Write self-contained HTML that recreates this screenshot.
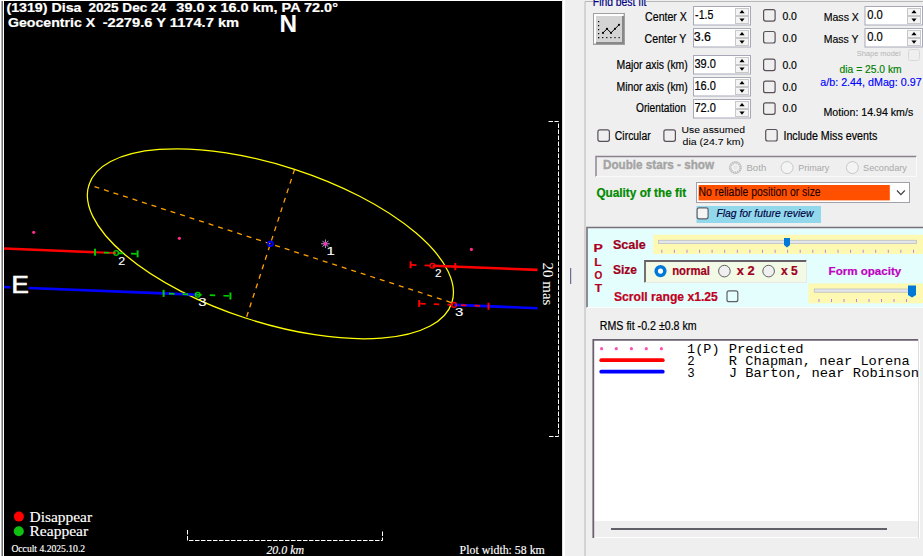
<!DOCTYPE html>
<html><head><meta charset="utf-8"><style>
html,body{margin:0;padding:0;width:923px;height:556px;overflow:hidden;background:#efefef;}
svg{display:block;font-family:"Liberation Sans",sans-serif;}
text{white-space:pre;}
</style></head><body>
<svg width="923" height="556" viewBox="0 0 923 556">
<rect x="0" y="0" width="923" height="556" fill="#efefef"/>
<rect x="0" y="0" width="565" height="1" fill="#fff"/>
<rect x="0" y="0" width="1" height="556" fill="#fff"/>
<rect x="1" y="1" width="1" height="555" fill="#b0b0b0"/>
<rect x="2" y="1" width="1" height="555" fill="#707070"/>
<rect x="3" y="1" width="1" height="555" fill="#fff"/>
<rect x="4" y="1" width="558" height="555" fill="#000"/>
<rect x="562" y="0" width="1" height="556" fill="#e0e0e0"/>
<rect x="563" y="0" width="2" height="556" fill="#fff"/>
<defs><clipPath id="pc"><rect x="4" y="1" width="558" height="555"/></clipPath></defs>
<g clip-path="url(#pc)">
<line x1="88.94" y1="184.84" x2="451.86" y2="302.76" stroke="#ffa000" stroke-width="1.3" stroke-dasharray="5 5" stroke-dashoffset="4.20"/>
<line x1="294.60" y1="169.33" x2="246.20" y2="318.27" stroke="#ffa000" stroke-width="1.3" stroke-dasharray="5 5"/>
<ellipse cx="270.4" cy="243.8" rx="190.8" ry="78.3" transform="rotate(18 270.4 243.8)" fill="none" stroke="#ffff00" stroke-width="1.25"/>
<circle cx="33.7" cy="232.3" r="1.6" fill="#ff2a8a"/>
<circle cx="179.4" cy="238.3" r="1.6" fill="#ff2a8a"/>
<circle cx="471.4" cy="249.4" r="1.6" fill="#ff2a8a"/>
<line x1="4" y1="248.54" x2="95" y2="252.18" stroke="#ff0000" stroke-width="2.6"/>
<line x1="95" y1="252.18" x2="116.2" y2="253.03" stroke="#ff0000" stroke-width="2"/>
<line x1="95.7" y1="252.21" x2="137" y2="253.86" stroke="#00cc00" stroke-width="1.7" stroke-dasharray="5.5 8.1" stroke-dashoffset="-8.2"/>
<rect x="94" y="248.68" width="2" height="7" fill="#00cc00"/>
<rect x="136.6" y="250.38" width="2" height="7" fill="#00cc00"/>
<circle cx="116.2" cy="253.03" r="2.4" fill="none" stroke="#00cc00" stroke-width="1.3"/>
<line x1="432.5" y1="265.68" x2="537.5" y2="269.88" stroke="#ff0000" stroke-width="2.6"/>
<line x1="411" y1="264.82" x2="455" y2="266.58" stroke="#ff0000" stroke-width="1.7" stroke-dasharray="5.5 8.1" stroke-dashoffset="0"/>
<rect x="409.6" y="261.30" width="2" height="7" fill="#ff0000"/>
<rect x="454.3" y="263.09" width="2" height="7" fill="#ff0000"/>
<circle cx="432.5" cy="265.68" r="2.4" fill="none" stroke="#ff0000" stroke-width="1.3"/>
<line x1="4" y1="287.04" x2="163.6" y2="293.38" stroke="#0000ff" stroke-width="2.6"/>
<line x1="163.6" y1="293.38" x2="197.7" y2="294.73" stroke="#0000ff" stroke-width="2.6"/>
<line x1="164.6" y1="293.42" x2="230" y2="296.01" stroke="#00cc00" stroke-width="1.7" stroke-dasharray="5.5 8.1" stroke-dashoffset="-4.4"/>
<rect x="162.6" y="289.88" width="2" height="7" fill="#00cc00"/>
<rect x="229.4" y="292.53" width="2" height="7" fill="#00cc00"/>
<circle cx="197.7" cy="294.73" r="2.4" fill="none" stroke="#00cc00" stroke-width="1.3"/>
<line x1="454" y1="304.90" x2="537.5" y2="308.22" stroke="#0000ff" stroke-width="2.6"/>
<line x1="420.2" y1="303.56" x2="488" y2="306.25" stroke="#ff0000" stroke-width="1.7" stroke-dasharray="5.5 8.1" stroke-dashoffset="0"/>
<rect x="418.2" y="300.02" width="2" height="7" fill="#ff0000"/>
<rect x="487.5" y="302.77" width="2" height="7" fill="#ff0000"/>
<circle cx="454" cy="304.90" r="2.4" fill="none" stroke="#ff0000" stroke-width="1.3"/>
<circle cx="270.4" cy="243.8" r="2.3" fill="none" stroke="#0000ff" stroke-width="2"/>
<line x1="325.4" y1="243.8" x2="329.70" y2="243.80" stroke="#b0a0c0" stroke-width="1"/>
<line x1="325.4" y1="243.8" x2="328.44" y2="246.84" stroke="#b0a0c0" stroke-width="1"/>
<line x1="325.4" y1="243.8" x2="325.40" y2="248.10" stroke="#b0a0c0" stroke-width="1"/>
<line x1="325.4" y1="243.8" x2="322.36" y2="246.84" stroke="#b0a0c0" stroke-width="1"/>
<line x1="325.4" y1="243.8" x2="321.10" y2="243.80" stroke="#b0a0c0" stroke-width="1"/>
<line x1="325.4" y1="243.8" x2="322.36" y2="240.76" stroke="#b0a0c0" stroke-width="1"/>
<line x1="325.4" y1="243.8" x2="325.40" y2="239.50" stroke="#b0a0c0" stroke-width="1"/>
<line x1="325.4" y1="243.8" x2="328.44" y2="240.76" stroke="#b0a0c0" stroke-width="1"/>
<circle cx="325.4" cy="243.8" r="1.9" fill="#ff30c0"/>
<path d="M548.5,121.5 H558.5 V436.5 H548.5" fill="none" stroke="#fff" stroke-width="1" stroke-dasharray="4.5 1.5"/>
<path d="M187.5,530 V540.5 H382.5 V530" fill="none" stroke="#fff" stroke-width="1" stroke-dasharray="4.5 1.5"/>
<rect x="10.5" y="274" width="18" height="20" fill="#000"/>
<text x="6.41" y="11.8" font-family="Liberation Sans" font-size="13" font-weight="bold" font-style="normal" fill="#fff" stroke="#fff" stroke-width="0.2" textLength="75.12" lengthAdjust="spacingAndGlyphs">(1319) Disa</text>
<text x="88.40" y="11.8" font-family="Liberation Sans" font-size="13" font-weight="bold" font-style="normal" fill="#fff" stroke="#fff" stroke-width="0.2" textLength="77.73" lengthAdjust="spacingAndGlyphs">2025 Dec 24</text>
<text x="176.39" y="11.8" font-family="Liberation Sans" font-size="13" font-weight="bold" font-style="normal" fill="#fff" stroke="#fff" stroke-width="0.2" textLength="161.56" lengthAdjust="spacingAndGlyphs">39.0 x 16.0 km, PA 72.0°</text>
<text x="8.00" y="26.5" font-family="Liberation Sans" font-size="13" font-weight="bold" font-style="normal" fill="#fff" stroke="#fff" stroke-width="0.2" textLength="87.12" lengthAdjust="spacingAndGlyphs">Geocentric X</text>
<text x="102.70" y="26.5" font-family="Liberation Sans" font-size="13" font-weight="bold" font-style="normal" fill="#fff" stroke="#fff" stroke-width="0.2" textLength="136.39" lengthAdjust="spacingAndGlyphs">-2279.6 Y 1174.7 km</text>
<text x="279.47" y="31.8" font-family="Liberation Sans" font-size="23.5" font-weight="bold" font-style="normal" fill="#fff" stroke="#fff" stroke-width="0.1" textLength="17.55" lengthAdjust="spacingAndGlyphs">N</text>
<text x="11.40" y="292.9" font-family="Liberation Sans" font-size="23.5" font-weight="normal" font-style="normal" fill="#fff" stroke="#fff" stroke-width="0.7" textLength="17.26" lengthAdjust="spacingAndGlyphs">E</text>
<text x="326.64" y="255.0" font-family="Liberation Sans" font-size="11" font-weight="normal" font-style="normal" fill="#fff" stroke="#fff" stroke-width="0.1" textLength="8.33" lengthAdjust="spacingAndGlyphs">1</text>
<text x="118.20" y="265.0" font-family="Liberation Sans" font-size="11" font-weight="normal" font-style="normal" fill="#fff" stroke="#fff" stroke-width="0.1" textLength="6.94" lengthAdjust="spacingAndGlyphs">2</text>
<text x="434.90" y="277.0" font-family="Liberation Sans" font-size="11" font-weight="normal" font-style="normal" fill="#fff" stroke="#fff" stroke-width="0.1" textLength="6.53" lengthAdjust="spacingAndGlyphs">2</text>
<text x="198.34" y="305.8" font-family="Liberation Sans" font-size="11" font-weight="normal" font-style="normal" fill="#fff" stroke="#fff" stroke-width="0.1" textLength="8.33" lengthAdjust="spacingAndGlyphs">3</text>
<text x="454.94" y="315.8" font-family="Liberation Sans" font-size="11" font-weight="normal" font-style="normal" fill="#fff" stroke="#fff" stroke-width="0.1" textLength="8.33" lengthAdjust="spacingAndGlyphs">3</text>
<text x="266.40" y="553.6" font-family="Liberation Serif" font-size="13" font-weight="normal" font-style="italic" fill="#fff" stroke="#fff" stroke-width="0.15" textLength="37.66" lengthAdjust="spacingAndGlyphs">20.0 km</text>
<text x="459.59" y="553.7" font-family="Liberation Serif" font-size="13" font-weight="normal" font-style="normal" fill="#fff" stroke="#fff" stroke-width="0.15" textLength="85.21" lengthAdjust="spacingAndGlyphs">Plot width: 58 km</text>
<text x="29.54" y="521.5" font-family="Liberation Serif" font-size="14.5" font-weight="normal" font-style="normal" fill="#fff" stroke="#fff" stroke-width="0.15" textLength="62.53" lengthAdjust="spacingAndGlyphs">Disappear</text>
<text x="29.53" y="535.9" font-family="Liberation Serif" font-size="14.5" font-weight="normal" font-style="normal" fill="#fff" stroke="#fff" stroke-width="0.15" textLength="58.60" lengthAdjust="spacingAndGlyphs">Reappear</text>
<text x="11.40" y="552.2" font-family="Liberation Serif" font-size="10" font-weight="normal" font-style="normal" fill="#fff" stroke="#fff" stroke-width="0.15" textLength="73.73" lengthAdjust="spacingAndGlyphs">Occult 4.2025.10.2</text>
<text transform="translate(542.8,262.6) rotate(90)" font-family="Liberation Serif" font-size="15" fill="#fff" textLength="42.8" lengthAdjust="spacingAndGlyphs">20 mas</text>
<circle cx="18.9" cy="516.6" r="5" fill="#ff0000"/>
<circle cx="18.8" cy="531.3" r="5" fill="#10c010"/>
</g>
<rect x="570" y="268" width="1.2" height="16" fill="#6a7090"/>
<rect x="584.5" y="1" width="1" height="0" fill="#b8b8b8"/>
<path d="M593,1.5 H585 V556" fill="none" stroke="#b8b8b8" stroke-width="1"/>
<path d="M646,1.5 H923" fill="none" stroke="#b8b8b8" stroke-width="1"/>
<text x="592.84" y="6.0" font-family="Liberation Sans" font-size="12" font-weight="normal" font-style="normal" fill="#000080" stroke="#000080" stroke-width="0.2" textLength="53.49" lengthAdjust="spacingAndGlyphs">Find best fit</text>
<rect x="593.5" y="13.5" width="31" height="31" fill="#d4d4d4" stroke="#a0a0a0" stroke-width="1"/>
<path d="M595,43 V15 H623" fill="none" stroke="#fff" stroke-width="2"/>
<path d="M596,43 H623 V16" fill="none" stroke="#888" stroke-width="2"/>
<rect x="598" y="21" width="1.2" height="1.2" fill="#000"/>
<rect x="598" y="25" width="1.2" height="1.2" fill="#000"/>
<rect x="598" y="29" width="1.2" height="1.2" fill="#000"/>
<rect x="598" y="33" width="1.2" height="1.2" fill="#000"/>
<rect x="598" y="37" width="1.2" height="1.2" fill="#000"/>
<rect x="598.0" y="37" width="1.2" height="1.2" fill="#000"/>
<rect x="602.1" y="37" width="1.2" height="1.2" fill="#000"/>
<rect x="606.2" y="37" width="1.2" height="1.2" fill="#000"/>
<rect x="610.3" y="37" width="1.2" height="1.2" fill="#000"/>
<rect x="614.4" y="37" width="1.2" height="1.2" fill="#000"/>
<rect x="618.5" y="37" width="1.2" height="1.2" fill="#000"/>
<polyline points="603,32.9 607,28.8 611,32.9 615,28.8 619,24.8" fill="none" stroke="#000" stroke-width="1"/>
<circle cx="603" cy="32.9" r="1.1" fill="#000"/>
<circle cx="607" cy="28.8" r="1.1" fill="#000"/>
<circle cx="611" cy="32.9" r="1.1" fill="#000"/>
<circle cx="615" cy="28.8" r="1.1" fill="#000"/>
<circle cx="619" cy="24.8" r="1.1" fill="#000"/>
<rect x="693.5" y="6.5" width="57" height="18.5" fill="#fff" stroke="#a8a8b8" stroke-width="1"/>
<rect x="735.5" y="8.5" width="13" height="7" fill="#f4f4f4" stroke="#c8c8c8" stroke-width="1"/>
<rect x="735.5" y="16.5" width="13" height="7" fill="#f4f4f4" stroke="#c8c8c8" stroke-width="1"/>
<path d="M739.4,13.3 L742,10 L744.6,13.3 Z" fill="#000"/>
<path d="M739.4,18.5 L742,21.8 L744.6,18.5 Z" fill="#000"/>
<rect x="693.5" y="28.5" width="57" height="18.5" fill="#fff" stroke="#a8a8b8" stroke-width="1"/>
<rect x="735.5" y="30.5" width="13" height="7" fill="#f4f4f4" stroke="#c8c8c8" stroke-width="1"/>
<rect x="735.5" y="38.5" width="13" height="7" fill="#f4f4f4" stroke="#c8c8c8" stroke-width="1"/>
<path d="M739.4,35.3 L742,32 L744.6,35.3 Z" fill="#000"/>
<path d="M739.4,40.5 L742,43.8 L744.6,40.5 Z" fill="#000"/>
<rect x="693.5" y="55.5" width="57" height="18.5" fill="#fff" stroke="#a8a8b8" stroke-width="1"/>
<rect x="735.5" y="57.5" width="13" height="7" fill="#f4f4f4" stroke="#c8c8c8" stroke-width="1"/>
<rect x="735.5" y="65.5" width="13" height="7" fill="#f4f4f4" stroke="#c8c8c8" stroke-width="1"/>
<path d="M739.4,62.3 L742,59 L744.6,62.3 Z" fill="#000"/>
<path d="M739.4,67.5 L742,70.8 L744.6,67.5 Z" fill="#000"/>
<rect x="693.5" y="77.5" width="57" height="18.5" fill="#fff" stroke="#a8a8b8" stroke-width="1"/>
<rect x="735.5" y="79.5" width="13" height="7" fill="#f4f4f4" stroke="#c8c8c8" stroke-width="1"/>
<rect x="735.5" y="87.5" width="13" height="7" fill="#f4f4f4" stroke="#c8c8c8" stroke-width="1"/>
<path d="M739.4,84.3 L742,81 L744.6,84.3 Z" fill="#000"/>
<path d="M739.4,89.5 L742,92.8 L744.6,89.5 Z" fill="#000"/>
<rect x="693.5" y="99.5" width="57" height="18.5" fill="#fff" stroke="#a8a8b8" stroke-width="1"/>
<rect x="735.5" y="101.5" width="13" height="7" fill="#f4f4f4" stroke="#c8c8c8" stroke-width="1"/>
<rect x="735.5" y="109.5" width="13" height="7" fill="#f4f4f4" stroke="#c8c8c8" stroke-width="1"/>
<path d="M739.4,106.3 L742,103 L744.6,106.3 Z" fill="#000"/>
<path d="M739.4,111.5 L742,114.8 L744.6,111.5 Z" fill="#000"/>
<rect x="865.0" y="6.5" width="57.5" height="18.5" fill="#fff" stroke="#a8a8b8" stroke-width="1"/>
<rect x="907.5" y="8.5" width="13" height="7" fill="#f4f4f4" stroke="#c8c8c8" stroke-width="1"/>
<rect x="907.5" y="16.5" width="13" height="7" fill="#f4f4f4" stroke="#c8c8c8" stroke-width="1"/>
<path d="M911.4,13.3 L914,10 L916.6,13.3 Z" fill="#000"/>
<path d="M911.4,18.5 L914,21.8 L916.6,18.5 Z" fill="#000"/>
<rect x="865.0" y="28.5" width="57.5" height="18.5" fill="#fff" stroke="#a8a8b8" stroke-width="1"/>
<rect x="907.5" y="30.5" width="13" height="7" fill="#f4f4f4" stroke="#c8c8c8" stroke-width="1"/>
<rect x="907.5" y="38.5" width="13" height="7" fill="#f4f4f4" stroke="#c8c8c8" stroke-width="1"/>
<path d="M911.4,35.3 L914,32 L916.6,35.3 Z" fill="#000"/>
<path d="M911.4,40.5 L914,43.8 L916.6,40.5 Z" fill="#000"/>
<rect x="763.6" y="9.6" width="11.5" height="11.5" rx="2" ry="2" fill="none" stroke="#5a505a" stroke-width="1.2"/>
<rect x="763.6" y="31.5" width="11.5" height="11.5" rx="2" ry="2" fill="none" stroke="#5a505a" stroke-width="1.2"/>
<rect x="763.6" y="59.1" width="11.5" height="11.5" rx="2" ry="2" fill="none" stroke="#5a505a" stroke-width="1.2"/>
<rect x="763.6" y="81.19999999999999" width="11.5" height="11.5" rx="2" ry="2" fill="none" stroke="#5a505a" stroke-width="1.2"/>
<rect x="763.6" y="102.8" width="11.5" height="11.5" rx="2" ry="2" fill="none" stroke="#5a505a" stroke-width="1.2"/>
<text x="645.12" y="20.7" font-family="Liberation Sans" font-size="12" font-weight="normal" font-style="normal" fill="#000" stroke="#000" stroke-width="0.2" textLength="41.80" lengthAdjust="spacingAndGlyphs">Center X</text>
<text x="644.62" y="42.7" font-family="Liberation Sans" font-size="12" font-weight="normal" font-style="normal" fill="#000" stroke="#000" stroke-width="0.2" textLength="41.61" lengthAdjust="spacingAndGlyphs">Center Y</text>
<text x="616.53" y="69.4" font-family="Liberation Sans" font-size="12" font-weight="normal" font-style="normal" fill="#000" stroke="#000" stroke-width="0.2" textLength="71.25" lengthAdjust="spacingAndGlyphs">Major axis (km)</text>
<text x="616.53" y="91.2" font-family="Liberation Sans" font-size="12" font-weight="normal" font-style="normal" fill="#000" stroke="#000" stroke-width="0.2" textLength="71.25" lengthAdjust="spacingAndGlyphs">Minor axis (km)</text>
<text x="636.00" y="112.3" font-family="Liberation Sans" font-size="12" font-weight="normal" font-style="normal" fill="#000" stroke="#000" stroke-width="0.2" textLength="49.90" lengthAdjust="spacingAndGlyphs">Orientation</text>
<text x="695.10" y="18.9" font-family="Liberation Sans" font-size="12" font-weight="normal" font-style="normal" fill="#000" stroke="#000" stroke-width="0.2" textLength="18.31" lengthAdjust="spacingAndGlyphs">-1.5</text>
<text x="693.77" y="40.9" font-family="Liberation Sans" font-size="12" font-weight="normal" font-style="normal" fill="#000" stroke="#000" stroke-width="0.2" textLength="17.24" lengthAdjust="spacingAndGlyphs">3.6</text>
<text x="694.38" y="67.6" font-family="Liberation Sans" font-size="12" font-weight="normal" font-style="normal" fill="#000" stroke="#000" stroke-width="0.2" textLength="21.45" lengthAdjust="spacingAndGlyphs">39.0</text>
<text x="694.38" y="89.6" font-family="Liberation Sans" font-size="12" font-weight="normal" font-style="normal" fill="#000" stroke="#000" stroke-width="0.2" textLength="21.45" lengthAdjust="spacingAndGlyphs">16.0</text>
<text x="694.38" y="111.6" font-family="Liberation Sans" font-size="12" font-weight="normal" font-style="normal" fill="#000" stroke="#000" stroke-width="0.2" textLength="21.45" lengthAdjust="spacingAndGlyphs">72.0</text>
<text x="782.40" y="20.2" font-family="Liberation Sans" font-size="11.6" font-weight="normal" font-style="normal" fill="#000" stroke="#000" stroke-width="0.2" textLength="14.51" lengthAdjust="spacingAndGlyphs">0.0</text>
<text x="782.40" y="41.9" font-family="Liberation Sans" font-size="11.6" font-weight="normal" font-style="normal" fill="#000" stroke="#000" stroke-width="0.2" textLength="14.51" lengthAdjust="spacingAndGlyphs">0.0</text>
<text x="782.40" y="68.9" font-family="Liberation Sans" font-size="11.6" font-weight="normal" font-style="normal" fill="#000" stroke="#000" stroke-width="0.2" textLength="14.51" lengthAdjust="spacingAndGlyphs">0.0</text>
<text x="782.40" y="90.5" font-family="Liberation Sans" font-size="11.6" font-weight="normal" font-style="normal" fill="#000" stroke="#000" stroke-width="0.2" textLength="14.51" lengthAdjust="spacingAndGlyphs">0.0</text>
<text x="782.40" y="112.0" font-family="Liberation Sans" font-size="11.6" font-weight="normal" font-style="normal" fill="#000" stroke="#000" stroke-width="0.2" textLength="14.51" lengthAdjust="spacingAndGlyphs">0.0</text>
<text x="823.70" y="20.8" font-family="Liberation Sans" font-size="10.6" font-weight="normal" font-style="normal" fill="#000" stroke="#000" stroke-width="0.15" textLength="35.22" lengthAdjust="spacingAndGlyphs">Mass X</text>
<text x="823.71" y="43.0" font-family="Liberation Sans" font-size="10.6" font-weight="normal" font-style="normal" fill="#000" stroke="#000" stroke-width="0.15" textLength="34.73" lengthAdjust="spacingAndGlyphs">Mass Y</text>
<text x="867.20" y="18.9" font-family="Liberation Sans" font-size="12" font-weight="normal" font-style="normal" fill="#000" stroke="#000" stroke-width="0.2" textLength="15.54" lengthAdjust="spacingAndGlyphs">0.0</text>
<text x="867.20" y="40.6" font-family="Liberation Sans" font-size="12" font-weight="normal" font-style="normal" fill="#000" stroke="#000" stroke-width="0.2" textLength="15.54" lengthAdjust="spacingAndGlyphs">0.0</text>
<text x="856.73" y="55.6" font-family="Liberation Sans" font-size="7.7" font-weight="normal" font-style="normal" fill="#b4b4b4" textLength="43.97" lengthAdjust="spacingAndGlyphs">Shape model</text>
<text x="839.60" y="72.6" font-family="Liberation Sans" font-size="10.3" font-weight="normal" font-style="normal" fill="#008000" stroke="#008000" stroke-width="0.15" textLength="62.01" lengthAdjust="spacingAndGlyphs">dia = 25.0 km</text>
<text x="820.30" y="86.4" font-family="Liberation Sans" font-size="10.6" font-weight="normal" font-style="normal" fill="#0000ff" stroke="#0000ff" stroke-width="0.15" textLength="101.33" lengthAdjust="spacingAndGlyphs">a/b: 2.44, dMag: 0.97</text>
<text x="823.54" y="116.4" font-family="Liberation Sans" font-size="10" font-weight="normal" font-style="normal" fill="#000" stroke="#000" stroke-width="0.15" textLength="89.68" lengthAdjust="spacingAndGlyphs">Motion: 14.94 km/s</text>
<text x="614.83" y="139.8" font-family="Liberation Sans" font-size="12" font-weight="normal" font-style="normal" fill="#000" stroke="#000" stroke-width="0.2" textLength="35.87" lengthAdjust="spacingAndGlyphs">Circular</text>
<text x="681.52" y="133.3" font-family="Liberation Sans" font-size="9.6" font-weight="normal" font-style="normal" fill="#000" stroke="#000" stroke-width="0.05" textLength="63.49" lengthAdjust="spacingAndGlyphs">Use assumed</text>
<text x="682.60" y="145.2" font-family="Liberation Sans" font-size="9.6" font-weight="normal" font-style="normal" fill="#000" stroke="#000" stroke-width="0.05" textLength="61.38" lengthAdjust="spacingAndGlyphs">dia (24.7 km)</text>
<text x="783.41" y="139.5" font-family="Liberation Sans" font-size="12" font-weight="normal" font-style="normal" fill="#000" stroke="#000" stroke-width="0.2" textLength="93.84" lengthAdjust="spacingAndGlyphs">Include Miss events</text>
<rect x="908.5" y="49.5" width="11" height="11" rx="2" fill="none" stroke="#d8d8d8" stroke-width="1"/>
<rect x="597.9" y="129.79999999999998" width="11.5" height="11.5" rx="2" ry="2" fill="none" stroke="#5a505a" stroke-width="1.2"/>
<rect x="663.9" y="129.79999999999998" width="11.5" height="11.5" rx="2" ry="2" fill="none" stroke="#5a505a" stroke-width="1.2"/>
<rect x="765.7" y="129.5" width="11.5" height="11.5" rx="2" ry="2" fill="none" stroke="#5a505a" stroke-width="1.2"/>
<path d="M596,176.5 V156.5 H916.5" fill="none" stroke="#8a8090" stroke-width="1.4"/>
<path d="M916.5,156.5 V176.5 H596" fill="none" stroke="#fafafa" stroke-width="1"/>
<text x="603.03" y="169.2" font-family="Liberation Sans" font-size="12" font-weight="bold" font-style="normal" fill="#a4a4a4" stroke="#a4a4a4" stroke-width="0.35" textLength="111.00" lengthAdjust="spacingAndGlyphs">Double stars - show</text>
<text x="746.45" y="170.5" font-family="Liberation Sans" font-size="9.2" font-weight="normal" font-style="normal" fill="#a8a8a8" textLength="19.80" lengthAdjust="spacingAndGlyphs">Both</text>
<text x="798.32" y="170.5" font-family="Liberation Sans" font-size="9.2" font-weight="normal" font-style="normal" fill="#a8a8a8" textLength="31.04" lengthAdjust="spacingAndGlyphs">Primary</text>
<text x="863.00" y="170.5" font-family="Liberation Sans" font-size="9.2" font-weight="normal" font-style="normal" fill="#a8a8a8" textLength="43.94" lengthAdjust="spacingAndGlyphs">Secondary</text>
<circle cx="735.4" cy="167.6" r="6" fill="#f4f4f4" stroke="#c8c8c8" stroke-width="1"/>
<circle cx="787.1" cy="167.6" r="6" fill="#f4f4f4" stroke="#c8c8c8" stroke-width="1"/>
<circle cx="852.4" cy="167.6" r="6" fill="#f4f4f4" stroke="#c8c8c8" stroke-width="1"/>
<circle cx="735.4" cy="167.6" r="4.8" fill="none" stroke="#b8b8b8" stroke-width="2.2" stroke-dasharray="1.2 0.9"/>
<circle cx="735.4" cy="167.6" r="2.4" fill="#e8e8e8"/>
<text x="596.40" y="196.7" font-family="Liberation Sans" font-size="12" font-weight="bold" font-style="normal" fill="#008a00" stroke="#008a00" stroke-width="0.2" textLength="89.74" lengthAdjust="spacingAndGlyphs">Quality of the fit</text>
<rect x="696.5" y="182.5" width="213" height="20" fill="#fff" stroke="#a0a0a8" stroke-width="1"/>
<rect x="698.6" y="185" width="191.2" height="15.4" fill="#ff5000"/>
<path d="M897,190.5 L900.9,194.6 L904.8,190.5" fill="none" stroke="#404040" stroke-width="1.2"/>
<text x="698.53" y="196.1" font-family="Liberation Sans" font-size="12" font-weight="normal" font-style="normal" fill="#200000" stroke="#200000" stroke-width="0.1" textLength="122.12" lengthAdjust="spacingAndGlyphs">No reliable position or size</text>
<rect x="696.5" y="206" width="124.5" height="17" fill="#92d8ec"/>
<rect x="697.1" y="207.79999999999998" width="11.0" height="11.0" rx="2" ry="2" fill="#f4f4f4" stroke="#606068" stroke-width="1.2"/>
<text x="716.40" y="217.1" font-family="Liberation Sans" font-size="10.8" font-weight="normal" font-style="italic" fill="#000040" stroke="#000040" stroke-width="0.15" textLength="97.15" lengthAdjust="spacingAndGlyphs">Flag for future review</text>
<rect x="586.5" y="227.5" width="340" height="80" fill="#e4fdfd"/>
<path d="M587,307.5 V227.5 H923" fill="none" stroke="#787078" stroke-width="1.6"/>
<path d="M587,307.5 H923" fill="none" stroke="#fafafa" stroke-width="1"/>
<text x="593.48" y="252.2" font-family="Liberation Sans" font-size="11.5" font-weight="bold" font-style="normal" fill="#b00020" stroke="#b00020" stroke-width="0.2" textLength="9.33" lengthAdjust="spacingAndGlyphs">P</text>
<text x="594.15" y="266.0" font-family="Liberation Sans" font-size="11.5" font-weight="bold" font-style="normal" fill="#b00020" stroke="#b00020" stroke-width="0.2" textLength="7.38" lengthAdjust="spacingAndGlyphs">L</text>
<text x="594.50" y="279.0" font-family="Liberation Sans" font-size="11.5" font-weight="bold" font-style="normal" fill="#b00020" stroke="#b00020" stroke-width="0.2" textLength="7.76" lengthAdjust="spacingAndGlyphs">O</text>
<text x="594.70" y="291.8" font-family="Liberation Sans" font-size="11.5" font-weight="bold" font-style="normal" fill="#b00020" stroke="#b00020" stroke-width="0.2" textLength="7.33" lengthAdjust="spacingAndGlyphs">T</text>
<text x="612.95" y="248.5" font-family="Liberation Sans" font-size="12" font-weight="bold" font-style="normal" fill="#a00020" stroke="#a00020" stroke-width="0.2" textLength="32.82" lengthAdjust="spacingAndGlyphs">Scale</text>
<text x="613.00" y="274.3" font-family="Liberation Sans" font-size="12" font-weight="bold" font-style="normal" fill="#a00020" stroke="#a00020" stroke-width="0.2" textLength="24.02" lengthAdjust="spacingAndGlyphs">Size</text>
<text x="613.99" y="300.5" font-family="Liberation Sans" font-size="12" font-weight="bold" font-style="normal" fill="#c00020" stroke="#c00020" stroke-width="0.2" textLength="103.84" lengthAdjust="spacingAndGlyphs">Scroll range x1.25</text>
<text x="828.57" y="275.4" font-family="Liberation Sans" font-size="11.2" font-weight="bold" font-style="normal" fill="#c000c0" stroke="#c000c0" stroke-width="0.2" textLength="72.69" lengthAdjust="spacingAndGlyphs">Form opacity</text>
<rect x="653.3" y="234.8" width="270" height="19.2" fill="#fdf8b2"/>
<rect x="658.5" y="240.3" width="258" height="3.2" fill="#e4e4ec" stroke="#b8c0c0" stroke-width="0.8"/>
<rect x="661.3" y="249.8" width="1" height="3" fill="#c080e0"/>
<rect x="673.9" y="249.8" width="1" height="3" fill="#c080e0"/>
<rect x="686.5" y="249.8" width="1" height="3" fill="#c080e0"/>
<rect x="699.1" y="249.8" width="1" height="3" fill="#c080e0"/>
<rect x="711.6" y="249.8" width="1" height="3" fill="#c080e0"/>
<rect x="724.2" y="249.8" width="1" height="3" fill="#c080e0"/>
<rect x="736.8" y="249.8" width="1" height="3" fill="#c080e0"/>
<rect x="749.4" y="249.8" width="1" height="3" fill="#c080e0"/>
<rect x="762.0" y="249.8" width="1" height="3" fill="#c080e0"/>
<rect x="774.6" y="249.8" width="1" height="3" fill="#c080e0"/>
<rect x="787.1" y="249.8" width="1" height="3" fill="#c080e0"/>
<rect x="799.7" y="249.8" width="1" height="3" fill="#c080e0"/>
<rect x="812.3" y="249.8" width="1" height="3" fill="#c080e0"/>
<rect x="824.9" y="249.8" width="1" height="3" fill="#c080e0"/>
<rect x="837.5" y="249.8" width="1" height="3" fill="#c080e0"/>
<rect x="850.1" y="249.8" width="1" height="3" fill="#c080e0"/>
<rect x="862.7" y="249.8" width="1" height="3" fill="#c080e0"/>
<rect x="875.2" y="249.8" width="1" height="3" fill="#c080e0"/>
<rect x="887.8" y="249.8" width="1" height="3" fill="#c080e0"/>
<rect x="900.4" y="249.8" width="1" height="3" fill="#c080e0"/>
<rect x="913.0" y="249.8" width="1" height="3" fill="#c080e0"/>
<path d="M784,238 H790 V245 L787,247.4 L784,245 Z" fill="#0078d7"/>
<rect x="644.5" y="260.5" width="162" height="22" fill="#f2fae6"/>
<path d="M645,282.5 V261 H806.5" fill="none" stroke="#686068" stroke-width="1.8"/>
<path d="M806.5,261 V282.5 H645" fill="none" stroke="#e8e8e8" stroke-width="1"/>
<circle cx="660.5" cy="271.1" r="6.1" fill="#0078d7"/>
<circle cx="660.5" cy="271.1" r="2.6" fill="#fff"/>
<circle cx="724.4" cy="271.1" r="5.8" fill="#f0f0f0" stroke="#606060" stroke-width="1"/>
<circle cx="768.6" cy="271.1" r="5.8" fill="#f0f0f0" stroke="#606060" stroke-width="1"/>
<text x="672.16" y="274.9" font-family="Liberation Sans" font-size="12" font-weight="bold" font-style="normal" fill="#a00020" stroke="#a00020" stroke-width="0.2" textLength="37.80" lengthAdjust="spacingAndGlyphs">normal</text>
<text x="736.70" y="274.9" font-family="Liberation Sans" font-size="12" font-weight="bold" font-style="normal" fill="#a00020" stroke="#a00020" stroke-width="0.2" textLength="17.83" lengthAdjust="spacingAndGlyphs">x 2</text>
<text x="780.90" y="274.9" font-family="Liberation Sans" font-size="12" font-weight="bold" font-style="normal" fill="#a00020" stroke="#a00020" stroke-width="0.2" textLength="16.79" lengthAdjust="spacingAndGlyphs">x 5</text>
<rect x="727.0" y="290.90000000000003" width="10.8" height="10.8" rx="2" ry="2" fill="none" stroke="#606060" stroke-width="1.2"/>
<rect x="808.4" y="283.5" width="115" height="19.8" fill="#fdf8b2"/>
<rect x="814.3" y="289" width="101.2" height="3.2" fill="#e4e4ec" stroke="#b8c0c0" stroke-width="0.8"/>
<rect x="818.5" y="299" width="1" height="3" fill="#c080e0"/>
<rect x="831" y="299" width="1" height="3" fill="#c080e0"/>
<rect x="843.5" y="299" width="1" height="3" fill="#c080e0"/>
<rect x="856" y="299" width="1" height="3" fill="#c080e0"/>
<rect x="868.5" y="299" width="1" height="3" fill="#c080e0"/>
<rect x="881" y="299" width="1" height="3" fill="#c080e0"/>
<rect x="893.5" y="299" width="1" height="3" fill="#c080e0"/>
<rect x="906" y="299" width="1" height="3" fill="#c080e0"/>
<path d="M908,285.5 H916 V295 L912,297.6 L908,295 Z" fill="#0078d7"/>
<text x="599.81" y="329.9" font-family="Liberation Sans" font-size="12" font-weight="normal" font-style="normal" fill="#000" stroke="#000" stroke-width="0.2" textLength="96.84" lengthAdjust="spacingAndGlyphs">RMS fit -0.2 ±0.8 km</text>
<rect x="592.5" y="339" width="325.5" height="199" fill="#fff"/>
<rect x="918" y="339" width="1" height="199" fill="#dcdcdc"/>
<rect x="919" y="339" width="1" height="199" fill="#fff"/>
<rect x="594" y="521" width="324" height="16" fill="#efefef"/>
<path d="M593.3,538 V339.9 H918" fill="none" stroke="#6a6070" stroke-width="1.8"/>
<rect x="611" y="528" width="276" height="2" fill="#606068"/>
<circle cx="601.6" cy="348.7" r="1.6" fill="#ff50b0"/>
<circle cx="616.3" cy="348.7" r="1.6" fill="#ff50b0"/>
<circle cx="631.4" cy="348.7" r="1.6" fill="#ff50b0"/>
<circle cx="646.3" cy="348.7" r="1.6" fill="#ff50b0"/>
<circle cx="661.4" cy="348.7" r="1.6" fill="#ff50b0"/>
<line x1="601.2" y1="360.2" x2="662.8" y2="360.2" stroke="#ff0000" stroke-width="3.7" stroke-linecap="round"/>
<line x1="601.2" y1="371.7" x2="662.8" y2="371.7" stroke="#0000ff" stroke-width="3.7" stroke-linecap="round"/>
<text x="687.11" y="353.0" font-family="Liberation Mono" font-size="12.4" font-weight="normal" font-style="normal" fill="#000" textLength="32.39" lengthAdjust="spacingAndGlyphs">1(P)</text>
<text x="687.20" y="364.7" font-family="Liberation Mono" font-size="12.4" font-weight="normal" font-style="normal" fill="#000">2</text>
<text x="687.20" y="376.8" font-family="Liberation Mono" font-size="12.4" font-weight="normal" font-style="normal" fill="#000">3</text>
<text x="728.78" y="353.0" font-family="Liberation Mono" font-size="12.4" font-weight="normal" font-style="normal" fill="#000" textLength="74.75" lengthAdjust="spacingAndGlyphs">Predicted</text>
<text x="728.79" y="364.7" font-family="Liberation Mono" font-size="12.4" font-weight="normal" font-style="normal" fill="#000" textLength="180.96" lengthAdjust="spacingAndGlyphs">R Chapman, near Lorena</text>
<text x="728.79" y="376.8" font-family="Liberation Mono" font-size="12.4" font-weight="normal" font-style="normal" fill="#000" textLength="190.26" lengthAdjust="spacingAndGlyphs">J Barton, near Robinson</text>
</svg>
</body></html>
